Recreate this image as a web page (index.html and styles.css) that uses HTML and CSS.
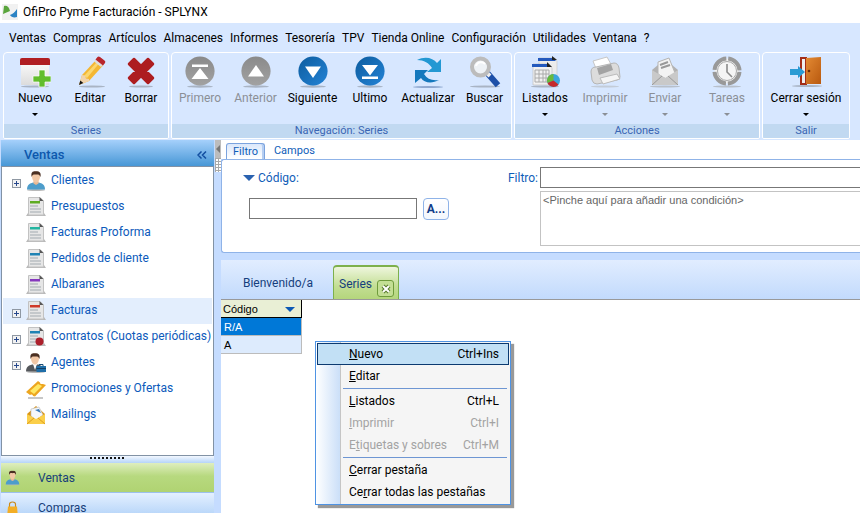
FILE: index.html
```html
<!DOCTYPE html>
<html lang="es">
<head>
<meta charset="utf-8">
<title>OfiPro Pyme Facturación - SPLYNX</title>
<link rel="stylesheet" href="styles.css">
</head>
<body>
<svg class="defs" width="0" height="0" aria-hidden="true">
  <defs>
    <linearGradient id="gBlue" x1="0" y1="0" x2="1" y2="1"><stop offset="0" stop-color="#0d5c9e"/><stop offset="1" stop-color="#2383d6"/></linearGradient>
    <linearGradient id="gGray" x1="0" y1="0" x2="0" y2="1"><stop offset="0" stop-color="#8a8a8a"/><stop offset="1" stop-color="#a2a2a2"/></linearGradient>
    <linearGradient id="gPaper" x1="0" y1="0" x2="0" y2="1"><stop offset="0" stop-color="#ffffff"/><stop offset="1" stop-color="#dcdcdc"/></linearGradient>
    <linearGradient id="gDoor" x1="0" y1="0" x2="1" y2="1"><stop offset="0" stop-color="#e48a33"/><stop offset="1" stop-color="#b8590f"/></linearGradient>
    <symbol id="disc" viewBox="0 0 32 32"><ellipse cx="16" cy="30.5" rx="13" ry="1.2" fill="#a9b4c4"/><circle cx="16" cy="15" r="14.6"/></symbol>
    <symbol id="doc" viewBox="0 0 20 20">
      <path d="M0 19l2-3h16l2 3z" fill="#b9b9b9"/>
      <path d="M2.500.5H14l3.500 3.500V18h-15z" fill="#e6e6e6" stroke="#c2c2c2"/>
      <path d="M13.500 0L17.500 4h-4z" fill="#555"/>
      <path d="M4 4h10v2.500H4z" fill="currentColor"/>
      <path d="M4 9h8M4 12h11M4 15h11" stroke="#b9bec2" stroke-width="1.300"/>
    </symbol>
    <symbol id="person" viewBox="0 0 20 20">
      <ellipse cx="10" cy="19" rx="9" ry="1" fill="#b9b9b9"/>
      <path d="M1 18.500c0-5 3-6 6-7h6c3 1 6 2 6 7z" fill="#4d9dcb"/>
      <path d="M7.500 10h5v2.500L10 14l-2.500-1.500z" fill="#e8b893"/>
      <path d="M6 5c0-6 8-6 8 0 0 4-2 6.500-4 6.500S6 9 6 5z" fill="#f2c8a6"/>
      <path d="M5.600 6C4.500 0 8 0 10 .3c3-.6 5.500 1 4.400 5.700C13.500 3 12 3.500 10 3.500S6.500 3 5.600 6z" fill="#4a2f22"/>
    </symbol>
  </defs>
</svg>

<header class="titlebar">
  <svg class="logo" viewBox="0 0 16 16" aria-hidden="true"><path d="M0 0h16v16H0z" fill="#f1f1f1"/><path d="M1 10L2 2c3-1 5 1 6 5z" fill="#5aa53c"/><path d="M15 5v8c-3 1-6 0-7-2 3-1 5-3 7-6z" fill="#2c83c4"/></svg>
  <span>OfiPro Pyme Facturación - SPLYNX</span>
</header>

<nav class="menubar">
  <a href="#">Ventas</a><a href="#">Compras</a><a href="#">Artículos</a><a href="#">Almacenes</a><a href="#">Informes</a><a href="#">Tesorería</a><a href="#">TPV</a><a href="#">Tienda Online</a><a href="#">Configuración</a><a href="#">Utilidades</a><a href="#">Ventana</a><a href="#">?</a>
</nav>

<div class="ribbon">
  <section class="group">
    <div class="tools tools-series">
      <button class="tool drop"><svg viewBox="0 0 32 32"><ellipse cx="16" cy="30.500" rx="14" ry="1" fill="#a9b4c4"/><path d="M2 3h28v26H2z" fill="url(#gPaper)"/><path d="M1 9V4q0-2 2-2h26q2 0 2 2v5z" fill="#b01e22"/><path d="M20 14h6v6h6v6h-6v5h-6v-5h-6v-6h6z" fill="#62bd2c" stroke="#fff" stroke-width=".7"/></svg>Nuevo</button>
      <button class="tool"><svg viewBox="0 0 32 32"><ellipse cx="18" cy="30.500" rx="13" ry="1" fill="#a9b4c4"/><path d="M5 29l3-10 14-15 7 5.500L15 25z" fill="#f4b733"/><path d="M10 20L23 6l2 1.500L13 22z" fill="#fbd76f"/><path d="M5 29l3-10 3 .5 1 3 3 .5v2z" fill="#f0d3ac"/><path d="M5 29l1.300-4.500 3 2.500z" fill="#151515"/><path d="M20 5.500l2-2.500 7 5.500-2 2.500z" fill="#ddd"/><path d="M21.500 3.500L23.500 1q1-1 2.500 0l4.500 3.500q1.500 1 .5 2.500l-2 2.500z" fill="#b8252b"/></svg>Editar</button>
      <button class="tool"><svg viewBox="0 0 32 32"><ellipse cx="16" cy="30.500" rx="12" ry="1" fill="#a9b4c4"/><path d="M9 3l7 7 7-7 5 5-7 7 7 7-5 5-7-7-7 7-5-5 7-7-7-7z" fill="#ad1d20" stroke="#ad1d20" stroke-width="2.500" stroke-linejoin="round"/></svg>Borrar</button>
    </div>
    <h2>Series</h2>
  </section>
  <section class="group">
    <div class="tools tools-nav">
      <button class="tool" disabled><svg viewBox="0 0 32 32"><use href="#disc" fill="url(#gGray)"/><path d="M8 8.500h16v2.500H8zM16 12l8.500 11h-17z" fill="#fff"/></svg>Primero</button>
      <button class="tool" disabled><svg viewBox="0 0 32 32"><use href="#disc" fill="url(#gGray)"/><path d="M16 9l8 11.500H8z" fill="#fff"/></svg>Anterior</button>
      <button class="tool"><svg viewBox="0 0 32 32"><use href="#disc" fill="url(#gBlue)"/><path d="M16 22l8-11.500H8z" fill="#fff"/></svg>Siguiente</button>
      <button class="tool"><svg viewBox="0 0 32 32"><use href="#disc" fill="url(#gBlue)"/><path d="M8 20.500h16V23H8zM16 19.500L24 9H8z" fill="#fff"/></svg>Ultimo</button>
      <button class="tool"><svg viewBox="0 0 32 32"><ellipse cx="16" cy="31" rx="15" ry="1" fill="#8fa8d0"/><path d="M5 4c8-4 16-2 20 3l4-4v13H15l5-4C17 7 12 4 5 4z" fill="#2398d3"/><path d="M27 24c-7 4-15 3-18-2l-6 5V14h13l-4 4c3 5 8 7 15 6z" fill="#1478bd"/></svg>Actualizar</button>
      <button class="tool"><svg viewBox="0 0 32 32"><ellipse cx="16" cy="30.500" rx="15" ry="1" fill="#a9b4c4"/><path d="M20 19l7 8" stroke="#1c4fa8" stroke-width="6" stroke-linecap="square"/><path d="M17 16l4 4" stroke="#eee" stroke-width="4"/><circle cx="11.500" cy="11" r="8.500" fill="#eef2f6" stroke="#bcbcbc" stroke-width="4"/><path d="M7 10c1-4 6-5 9-2" stroke="#fff" stroke-width="2" fill="none"/></svg>Buscar</button>
    </div>
    <h2>Navegación: Series</h2>
  </section>
  <section class="group">
    <div class="tools tools-actions">
      <button class="tool drop"><svg viewBox="0 0 32 32"><ellipse cx="16" cy="30.500" rx="14" ry="1" fill="#a9b4c4"/><path d="M10 2h16l2 3v22H10z" fill="#ececec" stroke="#c5c5c5" stroke-width=".6"/><path d="M9 2h15l3 3H9z" fill="#2359bd"/><path d="M23 0l5 4h-5z" fill="#222"/><path d="M4 8h16l3 4v17H4z" fill="#f1f1f1" stroke="#bbb" stroke-width=".6"/><path d="M3 8h15l3 3H3z" fill="#2359bd"/><path d="M18 6l5 5h-5z" fill="#222"/><path d="M6 14h14M6 18h14M6 22h14M6 26h14M6 14v12M10 14v12M14 14v12M17 14v12M20 14v12" stroke="#aaa"/><circle cx="24.500" cy="24.500" r="6.500" fill="#3ba5dc"/><path d="M24.500 24.500V18a6.500 6.500 0 0 0-6 9z" fill="#69b93b"/><path d="M24.500 24.500l-6 2.500a6.500 6.500 0 0 0 11 1.500z" fill="#c42a2c"/></svg>Listados</button>
      <button class="tool drop" disabled><svg viewBox="0 0 32 32"><ellipse cx="16" cy="30.500" rx="14" ry="1" fill="#c3ccd8"/><path d="M4 5l14-4 5 9-15 5z" fill="#fff" stroke="#c7c7c7"/><path d="M2 16q0-5 5-5l18-4q4 0 5 5l1 9q0 2-3 3L8 28q-4 0-5-4z" fill="#dcdcdc" stroke="#b5b5b5"/><path d="M8 12l14-4 2 6-14 5z" fill="#a3a3a3"/><path d="M11 22l17-4 3 5-17 5z" fill="#f5f5f5" stroke="#bbb"/></svg>Imprimir</button>
      <button class="tool drop" disabled><svg viewBox="0 0 32 32"><ellipse cx="16" cy="30.500" rx="15" ry="1" fill="#b7bfca"/><path d="M3 14L16 3l13 11v15H3z" fill="#b2b2b2"/><path d="M9 6l11-4 6 15-9 6-8-5z" fill="#f3f3f3" stroke="#b5b5b5"/><path d="M11 9l8-3M12 12l9-3" stroke="#999" stroke-width="2"/><path d="M3 14l13 8 13-8v15H3z" fill="#c9c9c9"/><path d="M3 29l10-9M29 29l-10-9" stroke="#999"/></svg>Enviar</button>
      <button class="tool drop" disabled><svg viewBox="0 0 32 32"><ellipse cx="16" cy="30.500" rx="14" ry="1" fill="#b7bfca"/><circle cx="16" cy="15" r="12.500" fill="#f0f0f0" stroke="#999" stroke-width="4" stroke-dasharray="17.600 2" stroke-dashoffset="-1"/><circle cx="16" cy="15" r="9.500" fill="#f5f5f5" stroke="#aaa"/><path d="M16 8v8l5 5" stroke="#8b8b8b" stroke-width="1.600" fill="none"/></svg>Tareas</button>
    </div>
    <h2>Acciones</h2>
  </section>
  <section class="group">
    <div class="tools tools-exit">
      <button class="tool drop"><svg viewBox="0 0 32 32"><ellipse cx="17" cy="30" rx="15" ry="1" fill="#a9b4c4"/><path d="M11 2h5v26h-5z" fill="#eee" stroke="#a32d18" stroke-width="2"/><path d="M16 2l15-1v27H16z" fill="url(#gDoor)"/><circle cx="19" cy="15" r="1.300" fill="#6d2a05"/><path d="M0 13h8V10l7 6-7 6v-3H0z" fill="#2b9bd4"/></svg>Cerrar sesión</button>
    </div>
    <h2>Salir</h2>
  </section>
</div>

<div class="workspace">
  <aside class="sidebar">
    <header class="side-head"><span>Ventas</span><button aria-label="Contraer"><svg viewBox="0 0 10 8"><path d="M4.500.5L1 4l3.500 3.500M9 .5L5.500 4 9 7.500" fill="none" stroke="#134fa0" stroke-width="1.500"/></svg></button></header>
    <ul class="tree">
      <li><button class="expander" aria-label="Expandir Clientes"></button><svg><use href="#person"/></svg><a href="#">Clientes</a></li>
      <li><svg class="green"><use href="#doc"/></svg><a href="#">Presupuestos</a></li>
      <li><svg class="teal"><use href="#doc"/></svg><a href="#">Facturas Proforma</a></li>
      <li><svg class="blue"><use href="#doc"/></svg><a href="#">Pedidos de cliente</a></li>
      <li><svg class="purple"><use href="#doc"/></svg><a href="#">Albaranes</a></li>
      <li class="hover"><button class="expander" aria-label="Expandir Facturas"></button><svg class="red"><use href="#doc"/></svg><a href="#">Facturas</a></li>
      <li><button class="expander" aria-label="Expandir Contratos"></button><svg class="blue" viewBox="0 0 20 20"><use href="#doc" width="20" height="20"/><circle cx="13.500" cy="14.500" r="4" fill="#ac1f2b"/></svg><a href="#">Contratos (Cuotas periódicas)</a></li>
      <li><button class="expander" aria-label="Expandir Agentes"></button><svg viewBox="0 0 20 20"><ellipse cx="10" cy="19" rx="9" ry="1" fill="#b9b9b9"/><path d="M0 18.500c0-5 3-6 6-7h6c3 1 6 2 6 7z" fill="#55585c"/><path d="M7 11h4l-2 6z" fill="#fff"/><path d="M5 5c0-6 8-6 8 0 0 4-2 6.500-4 6.500S5 9 5 5z" fill="#f2c8a6"/><path d="M4.600 6C3.500 0 7 0 9 .3c3-.6 5.500 1 4.400 5.700C12.500 3 11 3.500 9 3.500S5.500 3 4.600 6z" fill="#4a2f22"/><path d="M13 13v-1.500h4V13" fill="none" stroke="#174c77"/><path d="M10.500 13H20v6h-9.500z" fill="#1f6ea8"/><path d="M10.500 15.500H20" stroke="#123f66"/></svg><a href="#">Agentes</a></li>
      <li><svg viewBox="0 0 20 20"><path d="M2 19h15" stroke="#b5b5b5" stroke-width="1.500"/><path d="M0 13L12 2l2 1.500q0 2 2 1.500h1l3 1-11 11.500-2-.5q0-2-2-1.500L4 16z" fill="#eda61f"/><path d="M4 12l8-7 4 2-8 8z" fill="#ffe863"/></svg><a href="#">Promociones y Ofertas</a></li>
      <li><svg viewBox="0 0 20 20"><path d="M1 9l9-8 9 8v10H1z" fill="#d9951a"/><path d="M5 4l8-2 4 8-7 5-5-4z" fill="#f5f7fa" stroke="#bbb" stroke-width=".6"/><path d="M9 5l4-1 2 4z" fill="#3779b9"/><path d="M1 9l9 5 9-5v10H1z" fill="#fbcf4a"/><path d="M1 19l7-6M19 19l-7-6" stroke="#dd9e20"/></svg><a href="#">Mailings</a></li>
    </ul>
    <div class="grip"><i></i></div>
    <button class="area active"><svg viewBox="0 0 20 20"><use href="#person" width="20" height="20"/></svg>Ventas</button>
    <button class="area"><svg viewBox="0 0 20 20"><path d="M6 9V5q0-3 4-3t4 3v4" fill="none" stroke="#c98a1d" stroke-width="1.500"/><path d="M4 8h12l1 11H3z" fill="#f3ae26"/></svg>Compras</button>
  </aside>

  <div class="splitter"><span class="split-arrow"></span><span class="dots"></span></div>

  <main class="content">
    <div class="filter-tabs"><button class="selected">Filtro</button><button>Campos</button></div>
    <div class="filter-panel">
      <div class="code-field">
        <label for="codigo"><i></i>Código:</label>
        <div class="code-row"><input id="codigo" type="text"><button>A...</button></div>
      </div>
      <label class="filter-label" for="filtro">Filtro:</label>
      <div class="filter-fields">
        <input id="filtro" type="text">
        <textarea aria-label="Condiciones" placeholder="&lt;Pinche aquí para añadir una condición&gt;"></textarea>
      </div>
    </div>
    <div class="doc-tabs">
      <button class="tab">Bienvenido/a</button>
      <div class="tab current"><span>Series</span><button aria-label="Cerrar"><svg viewBox="0 0 10 10"><path d="M2 2l6 6M8 2L2 8" stroke="#56782a" stroke-width="4"/><path d="M2 2l6 6M8 2L2 8" stroke="#fff" stroke-width="2"/></svg></button></div>
    </div>
    <div class="sheet">
      <table>
        <thead><tr><th>Código<i></i></th></tr></thead>
        <tbody><tr class="picked"><td>R/A</td></tr><tr><td>A</td></tr></tbody>
      </table>
      <div class="context-menu" role="menu">
        <button class="focus"><span><u>N</u>uevo</span><kbd>Ctrl+Ins</kbd></button>
        <button><span><u>E</u>ditar</span></button>
        <hr>
        <button><span><u>L</u>istados</span><kbd>Ctrl+L</kbd></button>
        <button disabled><span><u>I</u>mprimir</span><kbd>Ctrl+I</kbd></button>
        <button disabled><span>E<u>t</u>iquetas y sobres</span><kbd>Ctrl+M</kbd></button>
        <hr>
        <button><span><u>C</u>errar pestaña</span></button>
        <button><span>Ce<u>r</u>rar todas las pestañas</span></button>
      </div>
    </div>
  </main>
</div>
</body>
</html>
```
FILE: styles.css
```css
* { box-sizing: border-box; }
body {
  margin: 0;
  height: 100vh;
  display: flex;
  flex-direction: column;
  overflow: hidden;
  background: #d7e7ff;
  color: #000;
  font: 12px/16px Roboto, "Open Sans", sans-serif;
}
button, input, textarea { font: inherit; color: inherit; margin: 0; }
button { border: 0; background: none; padding: 0; }
a { color: inherit; text-decoration: none; }
.defs { position: absolute; }

.titlebar { flex: none; display: flex; align-items: center; gap: 5px; height: 23px; padding-left: 2px; background: #fff; }
.logo { width: 16px; height: 16px; }

.menubar { flex: none; display: flex; gap: 7px; height: 29px; padding: 7px 9px 0; white-space: nowrap; }

.ribbon { flex: none; display: flex; gap: 2px; height: 88px; padding: 0 3px; }
.group { display: flex; flex-direction: column; height: 87px; border: 1px solid #fff; border-radius: 4px 4px 2px 2px; overflow: hidden; }
.tools { flex: 1; display: grid; padding-top: 3px; }
.tools-series { grid-template-columns: 62px 48px 54px; }
.tools-nav { grid-template-columns: 56px 55px 59px 56px 60px 53px; }
.tools-actions { grid-template-columns: repeat(3, 60px) 64px; }
.tools-exit { grid-template-columns: 86px; }
.group h2 { margin: 0; height: 14px; background: #c1d9f1; color: #3a66b4; font-size: 11px; line-height: 14px; font-weight: 400; text-align: center; }
.tool { display: flex; flex-direction: column; align-items: center; gap: 2px; white-space: nowrap; }
.tool svg { width: 32px; height: 32px; flex: none; }
.tool:disabled { color: #8b8f96; }
.drop::after { content: ""; margin-top: 5px; border: 3px solid transparent; border-top-color: currentColor; border-bottom: 0; }

.workspace { flex: 1; min-height: 0; display: grid; grid-template-columns: 214px 7px minmax(0, 1fr); background: #c5dcff; }

.sidebar { display: flex; flex-direction: column; min-height: 0; padding-left: 1px; overflow: hidden; }
.side-head { flex: none; display: flex; justify-content: space-between; align-items: center; height: 26px; padding: 3px 7px 0 23px; background: linear-gradient(#a5d0fb, #4797d6); color: #0d58ad; font-size: 13px; font-weight: 500; }
.side-head svg { display: block; width: 10px; height: 8px; }
.tree { flex: none; height: 290px; margin: 0; padding: 1px; list-style: none; border: 1px solid #8292a5; background: #fff; color: #0c5abb; }
.tree li { display: grid; grid-template-columns: 9px 20px 1fr; column-gap: 5px; align-items: center; height: 26px; padding-left: 9px; white-space: nowrap; }
.tree svg { grid-column: 2; width: 20px; height: 20px; }
.tree a { grid-column: 3; padding-bottom: 2px; }
.tree .hover { background: #e3eefd; }
.expander { width: 9px; height: 9px; margin-top: 5px; border: 1px solid #8f98a3; background: linear-gradient(#27488c, #27488c) center / 5px 1px no-repeat, linear-gradient(#27488c, #27488c) center / 1px 5px no-repeat, #f2f2f2; }
.green { color: #5eac22; }
.teal { color: #23b5a0; }
.blue { color: #1f83b4; }
.purple { color: #8638bd; }
.red { color: #cf3929; }
.grip { flex: none; display: flex; justify-content: center; height: 7px; background: linear-gradient(#f3f8ff, #b5d4f8); }
.grip i { width: 35px; height: 2px; margin-top: 1px; background: repeating-linear-gradient(90deg, #111 0 2px, transparent 2px 4px); }
.area { flex: none; display: flex; align-items: center; gap: 18px; height: 30px; padding-left: 4px; border-bottom: 1px solid #9cc0ec; background: linear-gradient(#e4f0ff, #a9cdf7); color: #17407a; }
.area svg { width: 15px; height: 20px; overflow: hidden; }
.area.active { background: linear-gradient(#dfeebf, #b7d97f 45%, #b0d372); }

.splitter { display: flex; flex-direction: column; padding-left: 1px; }
.split-arrow { height: 18px; background: #bcbcbc; }
.split-arrow::before { content: ""; display: block; width: 0; margin-left: 1px; border: 4px solid transparent; border-left: 0; border-right-color: #777; transform: translateY(5px); }
.dots { height: 14px; background: repeating-linear-gradient(#a9a9a9 0 1px, transparent 1px 3px), repeating-linear-gradient(90deg, #a9a9a9 0 1px, #fff 1px 3px); }

.content { display: flex; flex-direction: column; min-width: 0; min-height: 0; }
.filter-tabs { flex: none; display: flex; align-items: flex-end; gap: 9px; height: 19px; padding-left: 5px; background: #fff; color: #0f5db8; font-size: 11px; }
.filter-tabs button { height: 16px; line-height: 16px; }
.filter-tabs .selected { padding: 0 6px; border: 1px solid #7ba3de; border-bottom: 0; border-radius: 3px 3px 0 0; box-shadow: inset -2px 0 #b5cef2; background: linear-gradient(#dbe8fb, #fff); }
.filter-panel { flex: none; display: grid; grid-template-columns: 1fr auto minmax(0, 320px); column-gap: 2px; height: 94px; padding: 7px 0 7px 21px; border: solid #8fb3e8; border-width: 1px 0 1px 1px; border-radius: 3px 0 0 3px; background: #fff; color: #0f5db8; }
.filter-panel label { line-height: 22px; }
.code-field label { display: flex; align-items: center; gap: 3px; }
.code-field i { border: 6px solid transparent; border-top-color: #2a62b0; border-bottom: 0; }
.code-row { display: flex; gap: 6px; padding: 9px 0 0 6px; }
.code-row input { width: 168px; height: 21px; border: 1px solid #777; background: #fff; }
.code-row button { width: 26px; height: 22px; border: 1px solid #8fb3e8; border-radius: 4px; background: linear-gradient(#fff, #f3f7fd); color: #0f3b88; font-weight: 700; line-height: 18px; }
.filter-fields { display: flex; flex-direction: column; gap: 3px; color: #000; }
.filter-fields input { width: 100%; height: 21px; flex: none; border: 1px solid #777; border-right: 0; background: #fff; }
.filter-fields textarea { display: block; width: 100%; height: 55px; flex: none; padding: 0 2px; resize: none; border: 1px solid #c3c3c3; border-right: 0; background: #fff; font-family: "Liberation Sans", sans-serif; font-size: 11px; }
.filter-fields textarea::placeholder { color: #666; opacity: 1; }

.doc-tabs { flex: none; display: flex; align-items: flex-end; height: 40px; margin-top: 7px; border-bottom: 1px solid #999; background: linear-gradient(#e1edff, #c2dafc); color: #153e7c; }
.tab { height: 34px; color: inherit; }
button.tab { width: 112px; padding: 2px 0 0 2px; }
.tab.current { display: flex; justify-content: space-between; width: 66px; padding: 9px 4px 0 5px; border: 1px solid #7db04c; border-top-width: 2px; border-bottom: 0; border-radius: 4px 4px 0 0; background: linear-gradient(#eef6dd, #c3de94 60%, #b4d67c); }
.tab.current button { width: 17px; height: 17px; flex: none; margin-top: 4px; border: 1px solid #6f9b3c; border-radius: 3px; background: #c3df94; }
.tab.current svg { display: block; width: 10px; height: 10px; margin: 0 auto; }

.sheet { flex: 1; position: relative; background: #fff; }
.sheet table { width: 81px; border-collapse: separate; border-spacing: 0; font-family: "Liberation Sans", sans-serif; font-size: 11px; }
.sheet th { height: 18px; padding: 0 2px; border: solid #000; border-width: 0 1px 1px 0; background: #e9efd5; font-weight: 400; line-height: 16px; text-align: left; }
.sheet th i { float: right; margin: 6px 4px 0 0; border: 5px solid transparent; border-top-color: #0c59b5; border-bottom: 0; }
.sheet td { height: 18px; padding: 0 3px; border: solid #bcbcbc; border-width: 0 1px 1px 0; background: #ddebfd; line-height: 16px; }
.sheet .picked td { background: #0078d7; color: #fff; }

.context-menu { position: absolute; left: 94px; top: 41px; width: 196px; padding: 1px; border: 1px solid #4f93e3; background: linear-gradient(90deg, #fff 0, #cbdff8 24px, #c5c5c5 24px 25px, #f5f5f5 25px); box-shadow: 3px 3px 1px #999; }
.context-menu button { display: flex; justify-content: space-between; align-items: center; width: 100%; height: 22px; padding: 0 9px 0 31px; border: 1px solid transparent; white-space: nowrap; }
.context-menu .focus { background: #c2e0f5; border-color: #0c3a70; }
.context-menu :disabled { color: #a3a3a3; }
.context-menu kbd { font: inherit; }
.context-menu hr { margin: 1px 2px 1px 26px; border: 0; border-top: 1px solid #6e96d3; }
```
